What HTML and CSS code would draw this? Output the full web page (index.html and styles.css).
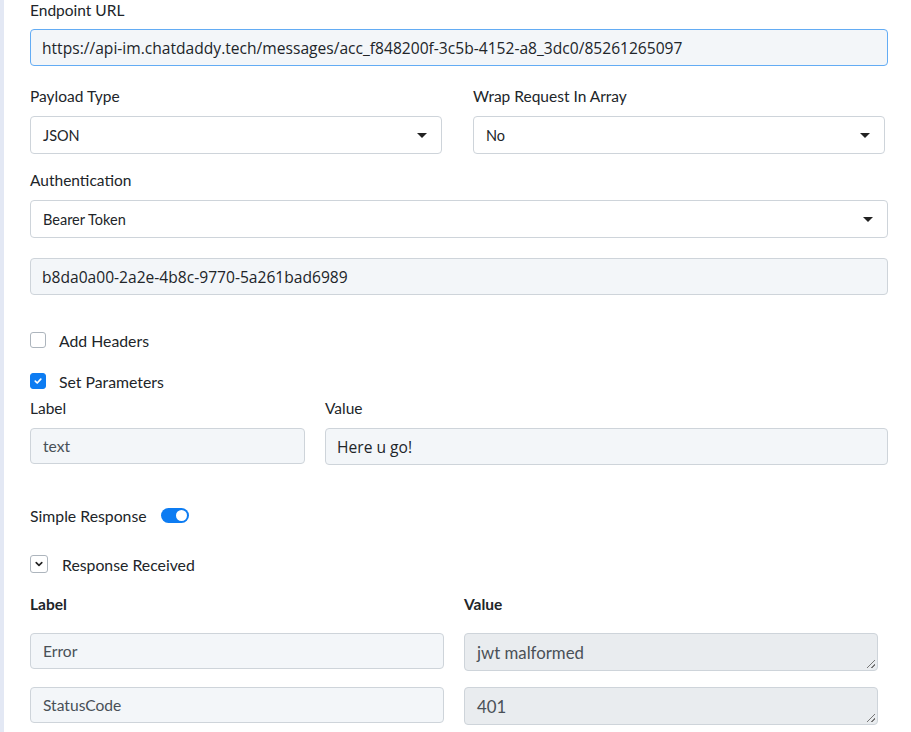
FILE: index.html
```html
<!DOCTYPE html>
<html>
<head>
<meta charset="utf-8">
<link rel="stylesheet" href="styles.css">
</head>
<body>
<div class="page">
  <div class="form">
    <div class="field">
      <div class="label">Endpoint URL</div>
      <div class="input focused mono">https://api-im.chatdaddy.tech/messages/acc_f848200f-3c5b-4152-a8_3dc0/85261265097</div>
    </div>
    <div class="row2">
      <div class="field">
        <div class="label">Payload Type</div>
        <div class="select">JSON<span class="caret"></span></div>
      </div>
      <div class="field">
        <div class="label">Wrap Request In Array</div>
        <div class="select">No<span class="caret"></span></div>
      </div>
    </div>
    <div class="field tight">
      <div class="label">Authentication</div>
      <div class="select">Bearer Token<span class="caret"></span></div>
    </div>
    <div class="input token mono">b8da0a00-2a2e-4b8c-9770-5a261bad6989</div>

    <div class="check first"><span class="box"></span><span>Add Headers</span></div>
    <div class="check second"><span class="box on"><svg width="10" height="10" viewBox="0 0 10 10"><path d="M2.3 5.2 L4.2 7 L7.8 3.2" fill="none" stroke="#fff" stroke-width="1.7" stroke-linecap="round" stroke-linejoin="round"/></svg></span><span>Set Parameters</span></div>

    <div class="params">
      <div class="field">
        <div class="label">Label</div>
        <div class="input short">text</div>
      </div>
      <div class="field">
        <div class="label">Value</div>
        <div class="input mono">Here u go!</div>
      </div>
    </div>

    <div class="toggle-row"><span>Simple Response</span><span class="switch"><span class="knob"></span></span></div>

    <div class="collapse"><span class="chev"><svg width="10" height="10" viewBox="0 0 10 10"><path d="M2.2 3.6 L5 6.4 L7.8 3.6" fill="none" stroke="#222" stroke-width="1.6" stroke-linecap="round" stroke-linejoin="round"/></svg></span><span>Response Received</span></div>

    <div class="resp">
      <div class="rhead">Label</div>
      <div class="rhead">Value</div>
      <div class="input short">Error</div>
      <div class="area">jwt malformed<span class="grip"></span></div>
      <div class="input short">StatusCode</div>
      <div class="area">401<span class="grip"></span></div>
    </div>
  </div>
</div>
</body>
</html>
```

FILE: styles.css
```css
html, body {
  margin: 0;
  padding: 0;
  background: #fff;
}
body {
  font-family: "Lato", "Liberation Sans", sans-serif;
  color: #212529;
}
.page {
  border-left: 4px solid #e3e8f4;
  min-height: 732px;
  box-sizing: border-box;
  padding: 0 23px 0 26px;
}
.form {
  width: 858px;
  display: flex;
  flex-direction: column;
}
.field {
  display: flex;
  flex-direction: column;
}
.label {
  font-size: 15.5px;
  line-height: 20px;
  color: #212529;
  height: 19px;
  margin-bottom: 10px;
}
.input {
  box-sizing: border-box;
  height: 37px;
  border: 1px solid #ced4da;
  border-radius: 4px;
  background: #f3f6f9;
  padding: 0 12px 0 11px;
  display: flex;
  align-items: center;
  font-size: 14px;
  color: #212529;
  white-space: nowrap;
  overflow: hidden;
}
.mono {
  font-family: "Open Sans", "Noto Sans", sans-serif;
  font-size: 15.6px;
}
.input.focused {
  border-color: #63acf4;
}
.select {
  box-sizing: border-box;
  height: 38px;
  border: 1px solid #ced4da;
  border-radius: 4px;
  background: #fff;
  padding: 0 12px;
  display: flex;
  align-items: center;
  justify-content: space-between;
  font-size: 14.5px;
  color: #212529;
}
.caret {
  width: 0;
  height: 0;
  border-left: 5px solid transparent;
  border-right: 5px solid transparent;
  border-top: 5px solid #222;
  margin-right: 2px;
}
.row2 {
  display: grid;
  grid-template-columns: 412px 412px;
  column-gap: 31px;
  margin-top: 20px;
}
.row2 .label {
  margin-bottom: 11px;
}
.field.tight {
  margin-top: 16px;
}
.field.tight .label {
  margin-bottom: 11px;
}
.token {
  margin-top: 20px;
}
.check {
  display: flex;
  align-items: center;
  font-size: 15.8px;
  gap: 13px;
  height: 20px;
}
.check.first {
  margin-top: 35px;
}
.check.second {
  margin-top: 21px;
}
.box {
  box-sizing: border-box;
  width: 16px;
  height: 16px;
  border: 1px solid #adb5bd;
  border-radius: 3px;
  background: #fff;
  display: flex;
  align-items: center;
  justify-content: center;
}
.box.on {
  background: #0d7cf2;
  border-color: #0d7cf2;
}
.params {
  display: grid;
  grid-template-columns: 275px 1fr;
  column-gap: 20px;
  margin-top: 7px;
}
.params .label {
  margin-bottom: 11px;
}
.params .input {
  height: 37px;
}
.params .field:first-child .input {
  height: 36px;
}
.short {
  font-size: 15.6px;
  color: #495057;
  padding-left: 12px;
}
.toggle-row {
  display: flex;
  align-items: center;
  gap: 14px;
  font-size: 15.8px;
  margin-top: 40px;
  height: 20px;
}
.switch {
  width: 28px;
  height: 15px;
  border-radius: 8px;
  background: #0d7cf2;
  position: relative;
  display: inline-block;
}
.knob {
  position: absolute;
  right: 2px;
  top: 2px;
  width: 11px;
  height: 11px;
  border-radius: 50%;
  background: #fff;
}
.collapse {
  display: flex;
  align-items: center;
  gap: 14px;
  font-size: 15.8px;
  margin-top: 29px;
  height: 20px;
}
.chev {
  box-sizing: border-box;
  width: 18px;
  height: 18px;
  border: 1px solid #adb5bd;
  border-radius: 3px;
  display: flex;
  align-items: center;
  justify-content: center;
}
.resp {
  display: grid;
  grid-template-columns: 414px 414px;
  column-gap: 20px;
  row-gap: 16px;
  margin-top: 20px;
}
.rhead {
  font-weight: bold;
  font-size: 15.5px;
  line-height: 20px;
  margin-bottom: 3px;
}
.area {
  box-sizing: border-box;
  height: 38px;
  border: 1px solid #ced4da;
  border-radius: 4px;
  background: #e9ecef;
  padding: 0 12px;
  display: flex;
  align-items: center;
  font-size: 16.8px;
  color: #495057;
  position: relative;
}
.resp .input {
  height: 36px;
}
.grip {
  position: absolute;
  right: 2px;
  bottom: 2px;
  width: 8px;
  height: 8px;
  background: linear-gradient(135deg, transparent 45%, #777 45%, #777 55%, transparent 55%, transparent 72%, #777 72%, #777 82%, transparent 82%);
}
```
